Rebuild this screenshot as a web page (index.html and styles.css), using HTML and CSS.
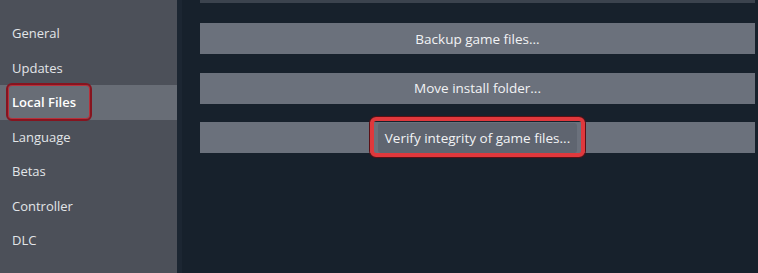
FILE: index.html
```html
<!DOCTYPE html>
<html lang="en">
<head>
	<meta charset="UTF-8">
	<title>Properties - Local Files</title>
	<link rel="stylesheet" href="styles.css">
</head>
<body>
<div class="main_wrap">
	<ul class="side_menu">
		<li class="menu_item">General</li>
		<li class="menu_item">Updates</li>
		<li class="menu_item on"><span class="mark_local">Local Files</span></li>
		<li class="menu_item">Language</li>
		<li class="menu_item">Betas</li>
		<li class="menu_item">Controller</li>
		<li class="menu_item">DLC</li>
	</ul>
	<div class="content_wrap">
		<div class="top_edge"></div>
		<button type="button" class="file_btn">Backup game files...</button>
		<button type="button" class="file_btn">Move install folder...</button>
		<button type="button" class="file_btn"><span class="mark_verify">Verify integrity of game files...</span></button>
	</div>
</div>
</body>
</html>
```

FILE: styles.css
```css
body,div,ul,li,button{margin:0;padding:0}
ul,li{list-style:none}
button{border:0 none;background-color:transparent;cursor:pointer}
body{background:#17212c;font-family:'Open Sans','Liberation Sans',sans-serif;color:#dfe3e6}
.main_wrap{display:flex;width:758px;height:273px;overflow:hidden}
.side_menu{width:177px;padding-top:16px;background-color:#4c5059;flex-shrink:0}
.side_menu .menu_item{height:34.5px;line-height:34px;padding-left:12px;font-size:13px;color:#e2e5e8;box-sizing:border-box}
.side_menu .menu_item.on{background-color:#686d76;color:#fff;font-weight:600}
.side_menu .mark_local{position:relative}
.side_menu .mark_local:after{content:'';position:absolute;left:-6px;right:-16px;top:-10px;bottom:-10px;border:2px solid #86141f;border-radius:6px;box-shadow:inset 0 0 0 1px #b8303a}
.content_wrap{flex:1;display:flex;flex-direction:column;gap:18.5px;padding:0 3px 0 18px;background-color:#17212c;border-left:5px solid #1c2632}
.content_wrap .top_edge{height:3px;margin-bottom:1.5px;background-color:#3b434e}
.content_wrap .file_btn{height:31px;background-color:#6b717c;font-family:'Open Sans','Liberation Sans',sans-serif;font-size:13.5px;color:#f2f3f5;text-align:center}
.content_wrap .mark_verify{position:relative;display:inline-block;padding:0 7px;line-height:30px;background-color:#5f6570;border-radius:3px}
.content_wrap .mark_verify:after{content:'';position:absolute;left:-8px;right:-8px;top:-6px;bottom:-4px;border:4px solid #e0383c;border-radius:6px;box-shadow:0 0 0 1px #5a1015}
```
